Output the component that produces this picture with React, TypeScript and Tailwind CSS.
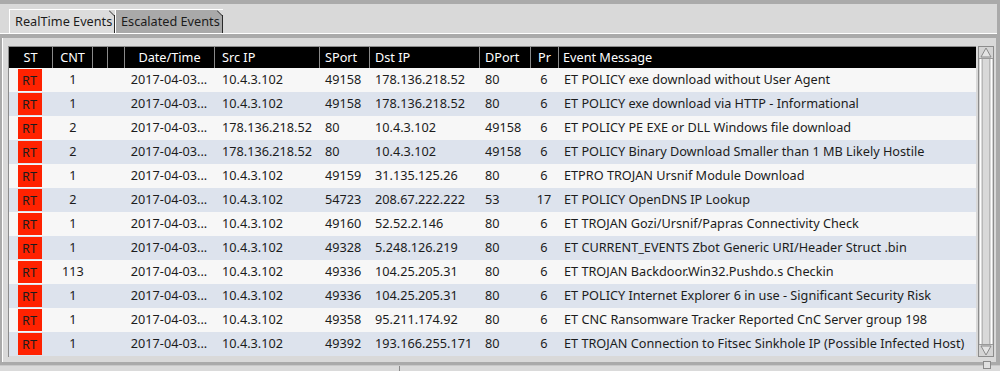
import React from "react";

type Row = [string, string, string, string, string, string, string];

const rows: Row[] = [
  ["1", "10.4.3.102", "49158", "178.136.218.52", "80", "6", "ET POLICY exe download without User Agent"],
  ["1", "10.4.3.102", "49158", "178.136.218.52", "80", "6", "ET POLICY exe download via HTTP - Informational"],
  ["2", "178.136.218.52", "80", "10.4.3.102", "49158", "6", "ET POLICY PE EXE or DLL Windows file download"],
  ["2", "178.136.218.52", "80", "10.4.3.102", "49158", "6", "ET POLICY Binary Download Smaller than 1 MB Likely Hostile"],
  ["1", "10.4.3.102", "49159", "31.135.125.26", "80", "6", "ETPRO TROJAN Ursnif Module Download"],
  ["2", "10.4.3.102", "54723", "208.67.222.222", "53", "17", "ET POLICY OpenDNS IP Lookup"],
  ["1", "10.4.3.102", "49160", "52.52.2.146", "80", "6", "ET TROJAN Gozi/Ursnif/Papras Connectivity Check"],
  ["1", "10.4.3.102", "49328", "5.248.126.219", "80", "6", "ET CURRENT_EVENTS Zbot Generic URI/Header Struct .bin"],
  ["113", "10.4.3.102", "49336", "104.25.205.31", "80", "6", "ET TROJAN Backdoor.Win32.Pushdo.s Checkin"],
  ["1", "10.4.3.102", "49336", "104.25.205.31", "80", "6", "ET POLICY Internet Explorer 6 in use - Significant Security Risk"],
  ["1", "10.4.3.102", "49358", "95.211.174.92", "80", "6", "ET CNC Ransomware Tracker Reported CnC Server group 198"],
  ["1", "10.4.3.102", "49392", "193.166.255.171", "80", "6", "ET TROJAN Connection to Fitsec Sinkhole IP (Possible Infected Host)"],
];

const cols = "grid-cols-[43px_40px_15px_17px_90px_105px_50px_110px_51px_28px_1fr]";

function Corner() {
  return (
    <svg className="absolute right-0 top-0" width="6" height="6" viewBox="0 0 6 6">
      <polygon points="0,0 6,0 6,6" fill="#d9d9d9" />
      <line x1="0" y1="0.5" x2="5.5" y2="6" stroke="#2a2a2a" strokeWidth="1" />
    </svg>
  );
}

export default function App() {
  const hdr = "text-white text-center truncate leading-[20px]";
  return (
    <div
      className="w-[1000px] h-[371px] bg-[#aaaaaa] flex flex-col overflow-hidden text-[12.7px] text-[#1c1c1c]"
      style={{ fontFamily: '"Noto Sans", "Open Sans", sans-serif' }}
    >
      {/* tab bar */}
      <div className="mt-[4px] mr-[3px] h-[30px] bg-[#d9d9d9] border-b border-white flex items-end pl-[9px] shrink-0">
        <div className="relative w-[106px] h-[24px] bg-[#dcdcdc] border-l border-t border-white pl-[5px] leading-[23px] whitespace-nowrap">
          RealTime Events
          <Corner />
          <div className="absolute right-0 top-[5px] bottom-0 w-px bg-[#2a2a2a]" />
        </div>
        <div className="relative w-[108px] h-[24px] bg-[#a9a9a9] border-l border-t border-white pl-[5px] leading-[23px] whitespace-nowrap">
          Escalated Events
          <Corner />
          <div className="absolute right-0 top-[5px] bottom-0 w-px bg-[#2a2a2a]" />
        </div>
      </div>

      {/* content panel */}
      <div className="mt-[4px] ml-[2px] mr-[4px] h-[324px] bg-[#d9d9d9] border-l border-white flex pt-[8px] pl-[5px] shrink-0">
        <div className="w-[968px] h-[311px] border-t border-l border-[#8c8c8c] flex flex-col">
          <div className={`grid ${cols} bg-black h-[21px] shrink-0`}>
            <div className={hdr}>ST</div>
            <div className={`${hdr} border-l border-[#8a8a8a]`}>CNT</div>
            <div className={`${hdr} border-l border-[#8a8a8a]`}></div>
            <div className={`${hdr} border-l border-[#8a8a8a]`}></div>
            <div className={`${hdr} border-l border-[#8a8a8a]`}>Date/Time</div>
            <div className={`${hdr} border-l border-[#8a8a8a] text-left pl-[7px]`}>Src IP</div>
            <div className={`${hdr} border-l border-[#8a8a8a] text-left pl-[5px]`}>SPort</div>
            <div className={`${hdr} border-l border-[#8a8a8a] text-left pl-[5px]`}>Dst IP</div>
            <div className={`${hdr} border-l border-[#8a8a8a] text-left pl-[5px]`}>DPort</div>
            <div className={`${hdr} border-l border-[#8a8a8a]`}>Pr</div>
            <div className={`${hdr} border-l border-[#8a8a8a] text-left pl-[4px]`}>Event Message</div>
          </div>
          {rows.map((r, i) => (
            <div
              key={i}
              className={`grid ${cols} h-[24px] items-center whitespace-nowrap ${i % 2 === 0 ? "bg-[#f7f7f7]" : "bg-[#dde3ed]"}`}
            >
              <div className="flex justify-center">
                <div className="w-[24px] h-[22px] bg-[#ff2200] text-center leading-[22px] -translate-x-[1px]">RT</div>
              </div>
              <div className="text-center pl-[2px]">{r[0]}</div>
              <div></div>
              <div></div>
              <div className="text-center overflow-hidden">2017-04-03...</div>
              <div className="pl-[8px]">{r[1]}</div>
              <div className="pl-[6px]">{r[2]}</div>
              <div className="pl-[6px]">{r[3]}</div>
              <div className="pl-[6px]">{r[4]}</div>
              <div className="text-center">{r[5]}</div>
              <div className="pl-[6px] overflow-hidden">{r[6]}</div>
            </div>
          ))}
        </div>
        {/* scrollbar */}
        <div className="ml-[2px] w-[16px] h-[311px] border border-[#8c8c8c] bg-[#d4d4d4] flex flex-col">
          <div className="h-[12px] border-b border-[#9a9a9a] flex items-center justify-center">
            <svg width="12" height="11" viewBox="0 0 12 11">
              <polygon points="6,1 11,10 1,10" fill="#e4e4e4" stroke="#8a8a8a" strokeWidth="1" />
            </svg>
          </div>
          <div className="flex-1 mx-[1px] border-l border-r border-white bg-[#d9d9d9]">
            <div className="h-full mx-[1px] border-l border-r border-[#b8b8b8]" />
          </div>
          <div className="h-[12px] border-t border-[#9a9a9a] flex items-center justify-center">
            <svg width="12" height="11" viewBox="0 0 12 11">
              <polygon points="1,1 11,1 6,10" fill="#e4e4e4" stroke="#8a8a8a" strokeWidth="1" />
            </svg>
          </div>
        </div>
      </div>

      {/* bottom strip */}
      <div className="mt-[3px] h-[6px] bg-[#dadada] border-t border-[#c8c8c8] flex shrink-0 relative">
        <div className="w-[400px] border-r border-[#8a8a8a]" />
        <div className="absolute left-[983px] -top-[5px] w-[8px] h-[8px] bg-[#e0e0e0] border border-[#8a8a8a]" />
      </div>
    </div>
  );
}
